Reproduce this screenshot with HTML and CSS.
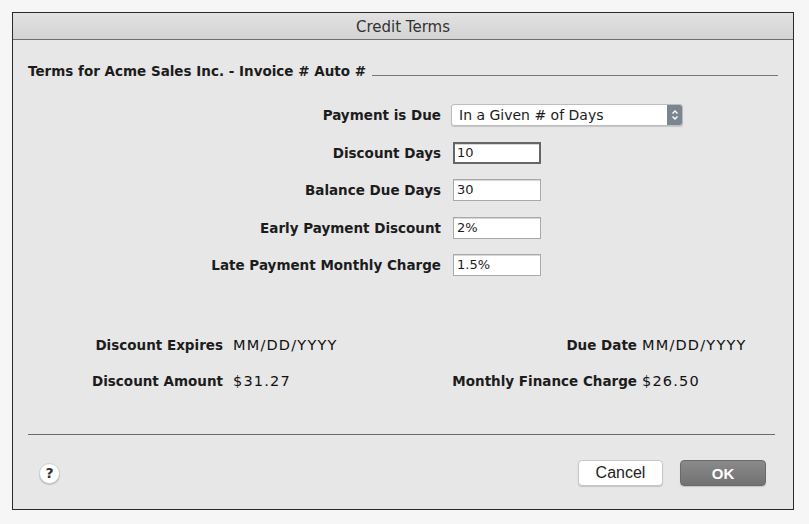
FILE: index.html
```html
<!DOCTYPE html>
<html lang="en">
<head>
    <meta charset="UTF-8">
    <title>Credit Terms</title>
    <link rel="stylesheet" href="styles.css">
</head>
<body>
    <div class="dialog">
        <div class="titlebar">Credit Terms</div>
        <div class="panel">
            <div class="group-head"><span>Terms for Acme Sales Inc. - Invoice # Auto #</span></div>

            <div class="form">
                <label>Payment is Due</label>
                <div class="select">
                    <span>In a Given # of Days</span>
                    <span class="stepper">
                        <svg width="8" height="12" viewBox="0 0 8 12">
                            <path d="M1.5 4.5 L4 2 L6.5 4.5 M1.5 7.5 L4 10 L6.5 7.5" fill="none" stroke="#fff" stroke-width="1.4"/>
                        </svg>
                    </span>
                </div>

                <label>Discount Days</label>
                <div class="field focus">10</div>

                <label>Balance Due Days</label>
                <div class="field">30</div>

                <label>Early Payment Discount</label>
                <div class="field">2%</div>

                <label>Late Payment Monthly Charge</label>
                <div class="field">1.5%</div>
            </div>

            <div class="summary">
                <b>Discount Expires</b>
                <span class="value">MM/DD/YYYY</span>
                <b>Due Date</b>
                <span class="value right">MM/DD/YYYY</span>

                <b>Discount Amount</b>
                <span class="value">$31.27</span>
                <b>Monthly Finance Charge</b>
                <span class="value right">$26.50</span>
            </div>

            <div class="sep"></div>

            <div class="footer">
                <button class="help">?</button>
                <div class="actions">
                    <button class="btn">Cancel</button>
                    <button class="btn primary">OK</button>
                </div>
            </div>
        </div>
    </div>
</body>
</html>
```

FILE: styles.css
```css
body { margin: 0; background: #f6f6f6; font-family: "DejaVu Sans", sans-serif; font-size: 13.5px; color: #1c1c1c; }

.dialog { margin: 12px 0 0 12px; width: 782px; height: 498px; box-sizing: border-box; border: 1px solid #2a2a2a; background: #e7e7e7; display: flex; flex-direction: column; }
.titlebar { height: 23px; padding-top: 3px; line-height: 23px; text-align: center; font-size: 15px; color: #333; background: linear-gradient(#e2e2e2, #d3d3d3); border-bottom: 1px solid #6f6f6f; }

.panel { flex: 1; padding: 0 15px; }

.group-head { margin-top: 23px; display: flex; align-items: flex-end; font-weight: bold; line-height: 16px; }
.group-head::after { content: ""; flex: 1; border-bottom: 1px solid #777; margin: 0 0 3px 6px; }

.form { margin-top: 25px; display: grid; grid-template-columns: 413px 1fr; column-gap: 10px; row-gap: 15.5px; }
.form label { text-align: right; font-weight: bold; line-height: 22px; }

.select { width: 232px; height: 22px; box-sizing: border-box; background: #fff; border: 1px solid #bdbdbd; border-radius: 3px; display: flex; align-items: center; justify-content: space-between; padding-left: 7px; font-size: 14px; box-shadow: 0 1px 1px rgba(0,0,0,0.15); }
.stepper { width: 15px; height: 20px; background: #7b8591; border-radius: 0 2px 2px 0; display: flex; align-items: center; justify-content: center; }

.field { margin-left: 2px; width: 88px; height: 22px; box-sizing: border-box; background: #fff; border: 1px solid #a9a9a9; padding-left: 3px; line-height: 20px; font-size: 13px; box-shadow: inset 0 1px 0 #d8d8d8; }
.field.focus { border: 2px solid #666; line-height: 18px; padding-left: 2px; }

.summary { margin-top: 60px; display: grid; grid-template-columns: 195px 220px 194px 1fr; row-gap: 18px; line-height: 18px; }
.summary b { text-align: right; }
.summary .value { padding-left: 10px; font-size: 14.5px; letter-spacing: 1.2px; color: #111; }
.summary .value.right { padding-left: 5px; }

.sep { margin-top: 44px; border-top: 1px solid #6a6a6a; margin-right: 3px; }

.footer { margin-top: 25px; display: flex; align-items: center; justify-content: space-between; }
.help { margin-left: 11px; width: 21px; height: 21px; border-radius: 50%; border: 1px solid #cfcfcf; background: #fff; font-family: "DejaVu Sans", sans-serif; font-size: 14px; font-weight: bold; color: #333; padding: 0; box-shadow: 0 1px 1px rgba(0,0,0,0.2); }

.actions { display: flex; gap: 17px; margin-right: 12px; }
.btn { width: 85px; height: 26px; border-radius: 4px; border: 1px solid #c6c6c6; background: #fff; font-family: "Liberation Sans", Arial, sans-serif; font-size: 16px; color: #222; padding: 0; box-shadow: 0 1px 1px rgba(0,0,0,0.15); }
.btn.primary { width: 86px; background: linear-gradient(#8a8a8a, #727272); border-color: #6a6a6a; color: #fff; font-weight: bold; font-size: 15px; }
```
